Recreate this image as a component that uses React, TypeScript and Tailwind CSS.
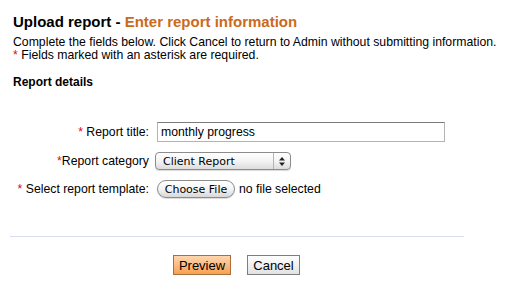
import { useState } from 'react';

function Req() {
  return <span className="text-[#e8001c]">*</span>;
}

function FakeSelect({ value }: { value: string }) {
  return (
    <div className="relative ml-[-2px] flex h-[18px] w-[136px] items-center rounded-[4px] border border-[#8c8c8c] bg-gradient-to-b from-white via-[#f4f4f4] to-[#dcdcdc] shadow-[0_1px_1px_rgba(0,0,0,0.15)]">
      <span className="pl-[7px] font-['DejaVu_Sans',sans-serif] text-[11px] leading-none text-black">{value}</span>
      <span className="absolute top-0 right-[16px] h-full w-px bg-[#b4b4b4]" />
      <svg className="absolute top-[4px] right-[5px]" width="6" height="9" viewBox="0 0 6 9">
        <path d="M3 0 L6 3.5 L0 3.5 Z" fill="#222" />
        <path d="M3 9 L6 5.5 L0 5.5 Z" fill="#222" />
      </svg>
    </div>
  );
}

export default function App() {
  const [title, setTitle] = useState('monthly progress');

  return (
    <div className="min-h-[288px] w-[506px] bg-white px-[13px] pt-[13px] font-['Liberation_Sans',Arial,sans-serif] text-black">
      <h1 className="text-[15px] leading-[18px] font-bold">
        Upload report - <span className="text-[#cc6a1c]">Enter report information</span>
      </h1>
      <p className="mt-[5px] text-[12.25px] leading-[13px] whitespace-nowrap">
        Complete the fields below. Click Cancel to return to Admin without submitting information.
        <br />
        <Req /> Fields marked with an asterisk are required.
      </p>
      <h2 className="mt-[14px] text-[12px] leading-[13px] font-bold">Report details</h2>

      <div className="mt-[33px] grid grid-cols-[136px_1fr] items-center gap-x-[8px] gap-y-[10px] text-[12.25px]">
        <label className="text-right leading-[20px] whitespace-nowrap">
          <Req /> Report title:
        </label>
        <input
          value={title}
          onChange={(e) => setTitle(e.target.value)}
          className="h-[20px] w-[288px] border border-[#b4b4b4] border-t-[#7c7c7c] px-[3px] text-[12.25px] outline-none"
        />

        <label className="text-right leading-[18px] whitespace-nowrap">
          <Req />Report category
        </label>
        <FakeSelect value="Client Report" />

        <label className="text-right leading-[18px] whitespace-nowrap">
          <Req /> Select report template:
        </label>
        <div className="flex items-center gap-[4px]">
          <button className="flex h-[18px] w-[78px] items-center justify-center rounded-full border border-[#8c8c8c] bg-gradient-to-b from-white via-[#f4f4f4] to-[#d8d8d8] font-['DejaVu_Sans',sans-serif] text-[11px] leading-none text-black shadow-[0_1px_1px_rgba(0,0,0,0.15)]">
            Choose File
          </button>
          <span className="leading-[18px]">no file selected</span>
        </div>
      </div>

      <div className="mt-[38px] ml-[-3px] h-px w-[454px] bg-[#d6dfee]" />

      <div className="mt-[18px] flex gap-[16px] pl-[160px]">
        <button className="h-[20px] w-[58px] border border-[#a8703c] bg-gradient-to-b from-[#fdd6ae] to-[#f8a04e] text-[13px] leading-none text-black">
          Preview
        </button>
        <button className="h-[20px] w-[53px] border border-[#7e7e7e] bg-gradient-to-b from-white to-[#e2e2e2] text-[13px] leading-none text-black">
          Cancel
        </button>
      </div>
    </div>
  );
}
